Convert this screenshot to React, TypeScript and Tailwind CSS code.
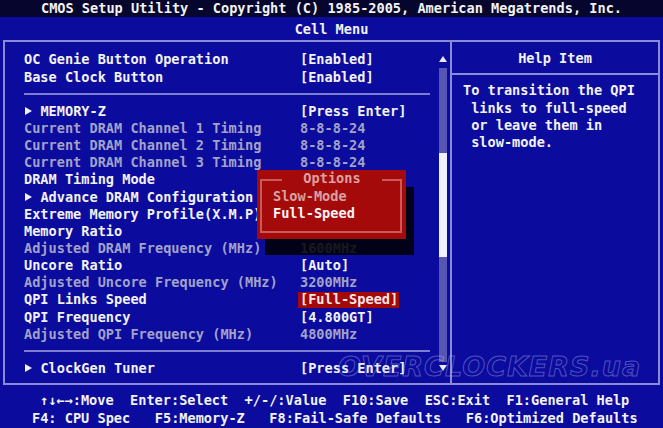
import React from 'react';

type Row =
  | { kind: 'item'; label: string; value: string; dim?: boolean; sub?: boolean; active?: boolean }
  | { kind: 'line' };

const rows: Row[] = [
  { kind: 'item', label: 'OC Genie Button Operation', value: '[Enabled]' },
  { kind: 'item', label: 'Base Clock Button', value: '[Enabled]' },
  { kind: 'line' },
  { kind: 'item', label: 'MEMORY-Z', value: '[Press Enter]', sub: true },
  { kind: 'item', label: 'Current DRAM Channel 1 Timing', value: '8-8-8-24', dim: true },
  { kind: 'item', label: 'Current DRAM Channel 2 Timing', value: '8-8-8-24', dim: true },
  { kind: 'item', label: 'Current DRAM Channel 3 Timing', value: '8-8-8-24', dim: true },
  { kind: 'item', label: 'DRAM Timing Mode', value: '[Auto]' },
  { kind: 'item', label: 'Advance DRAM Configuration', value: '[Press Enter]', sub: true },
  { kind: 'item', label: 'Extreme Memory Profile(X.M.P)', value: '[Disabled]' },
  { kind: 'item', label: 'Memory Ratio', value: '[Auto]' },
  { kind: 'item', label: 'Adjusted DRAM Frequency (MHz)', value: '1600MHz', dim: true },
  { kind: 'item', label: 'Uncore Ratio', value: '[Auto]' },
  { kind: 'item', label: 'Adjusted Uncore Frequency (MHz)', value: '3200MHz', dim: true },
  { kind: 'item', label: 'QPI Links Speed', value: '[Full-Speed]', active: true },
  { kind: 'item', label: 'QPI Frequency', value: '[4.800GT]' },
  { kind: 'item', label: 'Adjusted QPI Frequency (MHz)', value: '4800MHz', dim: true },
  { kind: 'line' },
  { kind: 'item', label: 'ClockGen Tuner', value: '[Press Enter]', sub: true },
];

const Arrow = ({ down }: { down?: boolean }) => (
  <svg width="8" height="7" viewBox="0 0 8 7" className="block">
    <polygon points={down ? '0,1 8,1 4,7' : '0,6 8,6 4,0'} fill="#e8e8ff" />
  </svg>
);

const Pointer = () => (
  <span className="inline-flex w-[16.4px] h-[17.15px] items-center align-top">
    <svg width="7" height="8" viewBox="0 0 7 8" className="block ml-[1px]">
      <polygon points="0,0 7,4 0,8" fill="#f2f2f2" />
    </svg>
  </span>
);

export default function App() {
  return (
    <div
      className="relative w-[663px] h-[428px] overflow-hidden bg-[#0b0b9e] text-[#f2f2f2] font-bold text-[13.6px] flex flex-col"
      style={{ fontFamily: '"DejaVu Sans Mono", "Liberation Mono", monospace' }}
    >
      <div className="h-[17px] bg-[#05052e] leading-[17px] text-center whitespace-pre">
        CMOS Setup Utility - Copyright (C) 1985-2005, American Megatrends, Inc.
      </div>
      <div className="h-[23px] leading-[24px] text-center">Cell Menu</div>

      <div className="mx-[3px] h-[345px] border-2 border-[#8a8ad6] flex">
        {/* settings list */}
        <div className="w-[445px] flex shrink-0">
          <div className="w-[425px] pl-[19px] pt-[9.4px]">
            {rows.map((r, i) =>
              r.kind === 'line' ? (
                <div key={i} className="h-[17.15px] flex items-center">
                  <div className="w-[406px] h-[2px] bg-[#7c7cd0]" />
                </div>
              ) : (
                <div key={i} className="h-[17.15px] leading-[17.15px] flex whitespace-pre">
                  <span className={`w-[276px] shrink-0 ${r.dim ? 'text-[#a2a2c8]' : ''}`}>
                    {r.sub && <Pointer />}
                    {r.label}
                  </span>
                  {r.active ? (
                    <span className="ml-[-2px] pl-[2px] pr-[1px] my-[1px] leading-[15px] bg-[#a30909] text-[#ffe6e6]">
                      {r.value}
                    </span>
                  ) : (
                    <span className={r.dim ? 'text-[#a2a2c8]' : ''}>{r.value}</span>
                  )}
                </div>
              )
            )}
          </div>
          {/* scrollbar */}
          <div className="ml-[9px] w-[8px] pt-[14px] flex flex-col">
            <Arrow />
            <div className="mt-[5px] h-[294px] bg-[#5656b2] pt-[85px]">
              <div className="h-[104px] bg-[#f0f0ff]" />
            </div>
            <div className="mt-[2px]">
              <Arrow down />
            </div>
          </div>
        </div>

        {/* help panel */}
        <div className="flex-1 border-l-2 border-[#8a8ad6] flex flex-col">
          <div className="h-[33px] pt-[2px] flex items-center justify-center border-b-2 border-[#8a8ad6]">
            Help Item
          </div>
          <div className="pl-[11px] pt-[7.4px] leading-[17.15px] whitespace-pre">
            <div>To transition the QPI</div>
            <div> links to full-speed</div>
            <div> or leave them in</div>
            <div> slow-mode.</div>
          </div>
        </div>
      </div>

      <div className="flex-1 pt-[7.4px] leading-[17.15px] whitespace-pre">
        <div className="pl-[40px]">↑↓←→:Move  Enter:Select  +/-/:Value  F10:Save  ESC:Exit  F1:General Help</div>
        <div className="pl-[32px]">F4: CPU Spec   F5:Memory-Z   F8:Fail-Safe Defaults   F6:Optimized Defaults</div>
      </div>

      {/* watermark */}
      <div
        className="absolute left-[338px] top-[347px] text-[27px] italic font-bold tracking-[1px] text-transparent [-webkit-text-stroke:1px_rgba(190,190,235,0.4)] pointer-events-none"
        style={{ fontFamily: '"DejaVu Sans", sans-serif' }}
      >
        OVERCLOCKERS.ua
      </div>

      {/* options popup shadow */}
      <div className="absolute left-[265px] top-[187px] w-[149px] h-[68px] bg-black/85" />
      {/* options popup */}
      <div className="absolute left-[257px] top-[170.4px] w-[149px] h-[69px] bg-[#a40a0a]">
        <div className="absolute left-[3px] right-[4px] top-[9px] bottom-[6px] border-2 border-[#c85a5a]" />
        <div className="absolute left-[25px] w-[100px] top-0 h-[17.15px] leading-[17.15px] text-center bg-[#a40a0a] text-[#dba0a0]">
          Options
        </div>
        <div className="absolute left-[16px] top-[17.15px] leading-[17.15px]">
          <div className="text-[#d6a2a2]">Slow-Mode</div>
          <div className="text-[#fff4f4]">Full-Speed</div>
        </div>
      </div>
    </div>
  );
}
